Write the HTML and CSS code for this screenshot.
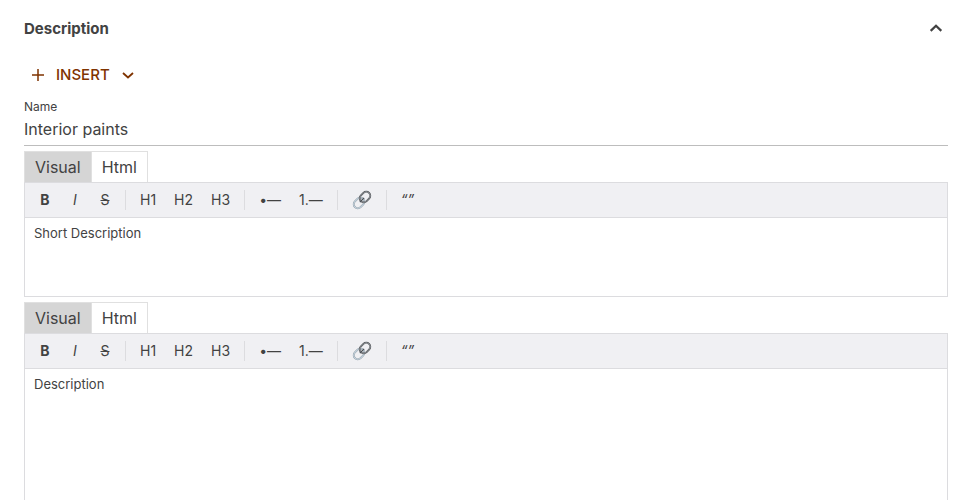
FILE: index.html
```html
<!DOCTYPE html>
<html lang="en">
<head>
    <meta charset="UTF-8">
    <meta name="viewport" content="width=device-width, initial-scale=1.0">
    <title>Description</title>
    <link rel="stylesheet" href="styles.css">
</head>
<body>
    <section class="panel">
        <header class="panel-header">
            <h2>Description</h2>
            <button type="button" class="collapse-btn" aria-label="Collapse">
                <svg width="24" height="24" viewBox="0 0 24 24"><path d="M6.700 13.900 12 8.700l5.300 5.200" fill="none" stroke="currentColor" stroke-width="2.200"/></svg>
            </button>
        </header>

        <button type="button" class="insert-btn">
            <svg width="16" height="16" viewBox="0 0 16 16"><path d="M8 2v12M2 8h12" fill="none" stroke="currentColor" stroke-width="1.500"/></svg>
            <span>INSERT</span>
            <svg width="16" height="16" viewBox="0 0 16 16"><path d="M3 6 8 10.500 13 6" fill="none" stroke="currentColor" stroke-width="1.800"/></svg>
        </button>

        <div class="field">
            <label for="name">Name</label>
            <input type="text" id="name" value="Interior paints">
        </div>

        <!-- Short description -->
        <div class="editor">
            <div class="tabs">
                <button type="button" class="tab active">Visual</button>
                <button type="button" class="tab">Html</button>
            </div>
            <div class="toolbar">
                <button type="button" class="tool"><b>B</b></button>
                <button type="button" class="tool"><i>I</i></button>
                <button type="button" class="tool"><s>S</s></button>
                <span class="separator"></span>
                <button type="button" class="tool">H1</button>
                <button type="button" class="tool">H2</button>
                <button type="button" class="tool">H3</button>
                <span class="separator"></span>
                <button type="button" class="tool">•—</button>
                <button type="button" class="tool">1.—</button>
                <span class="separator"></span>
                <button type="button" class="tool" aria-label="Link">
                    <svg width="20" height="20" viewBox="-1 -1 20 20" fill="none">
                        <g transform="rotate(-45 9 9)">
                            <rect x="-1" y="5" width="11.500" height="8" rx="4" stroke="#8b959d" stroke-width="1.900"/>
                            <rect x="-1" y="5" width="11.500" height="8" rx="4" stroke="#c6d6e2" stroke-width="1.100"/>
                            <rect x="7.500" y="5" width="11.500" height="8" rx="4" stroke="#56595c" stroke-width="1.900"/>
                            <rect x="7.500" y="5" width="11.500" height="8" rx="4" stroke="#a4abb1" stroke-width="0.600"/>
                            <path d="M6 9h6" stroke="#4a4f54" stroke-width="1.400"/>
                        </g>
                    </svg>
                </button>
                <span class="separator"></span>
                <button type="button" class="tool"><i>“”</i></button>
            </div>
            <div class="editor-content" contenteditable="true">Short Description</div>
        </div>

        <!-- Description -->
        <div class="editor editor-large">
            <div class="tabs">
                <button type="button" class="tab active">Visual</button>
                <button type="button" class="tab">Html</button>
            </div>
            <div class="toolbar">
                <button type="button" class="tool"><b>B</b></button>
                <button type="button" class="tool"><i>I</i></button>
                <button type="button" class="tool"><s>S</s></button>
                <span class="separator"></span>
                <button type="button" class="tool">H1</button>
                <button type="button" class="tool">H2</button>
                <button type="button" class="tool">H3</button>
                <span class="separator"></span>
                <button type="button" class="tool">•—</button>
                <button type="button" class="tool">1.—</button>
                <span class="separator"></span>
                <button type="button" class="tool" aria-label="Link">
                    <svg width="20" height="20" viewBox="-1 -1 20 20" fill="none">
                        <g transform="rotate(-45 9 9)">
                            <rect x="-1" y="5" width="11.500" height="8" rx="4" stroke="#8b959d" stroke-width="1.900"/>
                            <rect x="-1" y="5" width="11.500" height="8" rx="4" stroke="#c6d6e2" stroke-width="1.100"/>
                            <rect x="7.500" y="5" width="11.500" height="8" rx="4" stroke="#56595c" stroke-width="1.900"/>
                            <rect x="7.500" y="5" width="11.500" height="8" rx="4" stroke="#a4abb1" stroke-width="0.600"/>
                            <path d="M6 9h6" stroke="#4a4f54" stroke-width="1.400"/>
                        </g>
                    </svg>
                </button>
                <span class="separator"></span>
                <button type="button" class="tool"><i>“”</i></button>
            </div>
            <div class="editor-content" contenteditable="true">Description</div>
        </div>
    </section>
</body>
</html>
```

FILE: styles.css
```css
* {
    box-sizing: border-box;
}

body {
    margin: 0;
    background: #fff;
    color: #424242;
    font-family: Inter, 'Liberation Sans', sans-serif;
}

button,
input {
    font-family: inherit;
    color: inherit;
}

button {
    border: none;
    background: none;
    padding: 0;
    cursor: pointer;
}

svg {
    display: block;
}

.panel {
    height: 100vh;
    overflow: hidden;
    padding: 0 24px;
}

.panel-header {
    display: flex;
    align-items: center;
    justify-content: space-between;
    height: 57px;
}

.panel-header h2 {
    margin: 0;
    font-size: 15px;
    font-weight: 700;
}

.insert-btn {
    display: flex;
    align-items: center;
    height: 35px;
    padding: 0 6px;
    color: #7f3300;
    font-size: 15px;
    font-weight: 500;
}

.insert-btn span {
    padding: 0 10px;
}

.field {
    padding-top: 7px;
    border-bottom: 1px solid #bdbdbd;
}

.field label {
    display: block;
    font-size: 12px;
    line-height: 16px;
}

.field input {
    display: block;
    width: 100%;
    height: 30px;
    padding: 0 0 2px;
    border: none;
    outline: none;
    background: transparent;
    font-size: 16px;
}

.editor {
    margin-top: 5px;
}

.tabs {
    display: flex;
}

.tab {
    height: 31px;
    padding: 0 10px;
    border: 1px solid #e0e0e0;
    border-bottom: none;
    font-size: 16px;
}

.tab + .tab {
    margin-left: -1px;
}

.tab.active {
    background: #d5d5d5;
}

.toolbar {
    display: flex;
    align-items: center;
    height: 36px;
    padding: 0 5px;
    border: 1px solid #dcdcdf;
    background: #f0f0f3;
}

.tool {
    display: flex;
    align-items: center;
    justify-content: center;
    min-width: 30px;
    height: 30px;
    padding: 0 9px 1px;
    font-size: 14px;
}

.separator {
    width: 1px;
    height: 20px;
    margin: 0 5px;
    background: #dcdcdf;
}

.editor-content {
    min-height: 79px;
    padding: 7px 9px;
    border: 1px solid #dcdcdf;
    border-top: none;
    outline: none;
    font-size: 13px;
    line-height: 16px;
}

.editor-large .editor-content {
    min-height: 200px;
}
```
